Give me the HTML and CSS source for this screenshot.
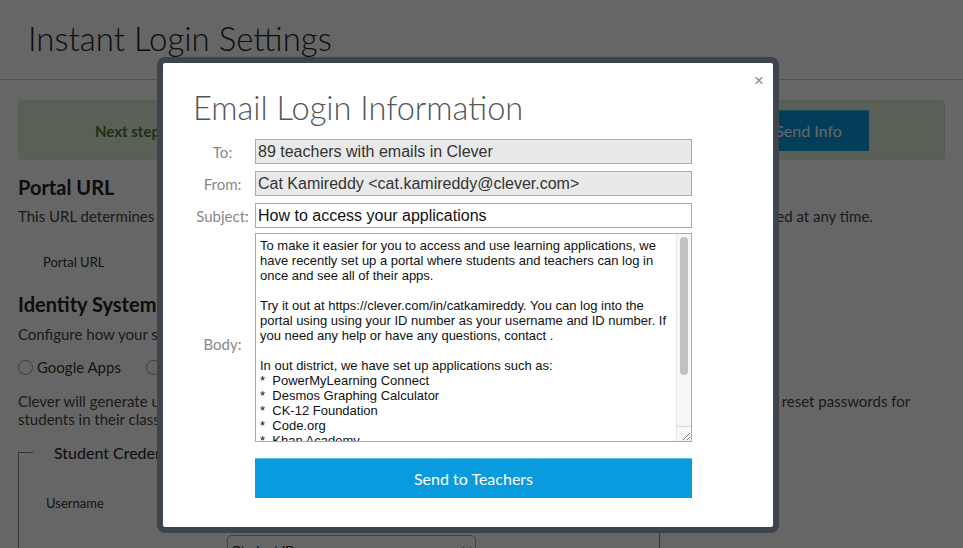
FILE: index.html
```html
<!DOCTYPE html>
<html>
<head>
    <meta charset="utf-8">
    <title>Instant Login Settings</title>
    <link rel="stylesheet" href="styles.css">
</head>
<body>
    <div class="page">
        <header class="page-header">
            <h1>Instant Login Settings</h1>
        </header>

        <main class="content">
            <div class="next-step">
                <span class="next-text">Next step: let your teachers know how to log in</span>
                <button class="btn-send" type="button">Send Info</button>
            </div>

            <section>
                <h2>Portal URL</h2>
                <p>This URL determines where students and teachers in your district go to log in. It can be customized and easily changed at any time.</p>
                <div class="field-row">
                    <label for="portalUrl">Portal URL</label>
                    <input type="text" id="portalUrl" value="https://clever.com/in/catkamireddy" />
                </div>
            </section>

            <section>
                <h2>Identity System</h2>
                <p>Configure how your students and teachers will log in to the portal.</p>
                <div class="radios">
                    <label class="radio"><input type="radio" name="idp" /> Google Apps</label>
                    <label class="radio"><input type="radio" name="idp" /> Active Directory</label>
                    <label class="radio"><input type="radio" name="idp" checked /> Clever Passwords</label>
                </div>
                <p>Clever will generate usernames and passwords for everyone. Teachers and school admins can print badges, view and reset passwords for students in their classes from their teacher dashboard.</p>

                <fieldset class="creds">
                    <legend>Student Credentials</legend>
                    <div class="cred-label">Username</div>
                    <div class="cred-select">
                        <select>
                            <option>Student ID</option>
                        </select>
                    </div>
                </fieldset>
            </section>
        </main>
    </div>

    <div class="backdrop"></div>

    <div class="modal">
        <button class="modal-close" type="button">&times;</button>
        <h2 class="modal-title">Email Login Information</h2>
        <form class="email-form">
            <div class="form-row">
                <label>To:</label>
                <input type="text" class="locked" value="89 teachers with emails in Clever" disabled />
            </div>
            <div class="form-row">
                <label>From:</label>
                <input type="text" class="locked" value="Cat Kamireddy &lt;cat.kamireddy@clever.com&gt;" disabled />
            </div>
            <div class="form-row">
                <label>Subject:</label>
                <input type="text" value="How to access your applications" />
            </div>
            <div class="form-row body-row">
                <label>Body:</label>
                <div class="body-wrap">
                    <textarea class="body-text">To make it easier for you to access and use learning applications, we have recently set up a portal where students and teachers can log in once and see all of their apps.

Try it out at https://clever.com/in/catkamireddy. You can log into the portal using using your ID number as your username and ID number. If you need any help or have any questions, contact .

In out district, we have set up applications such as:
*  PowerMyLearning Connect
*  Desmos Graphing Calculator
*  CK-12 Foundation
*  Code.org
*  Khan Academy
*  Newsela

Log in today and try them out!

Thanks,
Cat Kamireddy</textarea>
                    <div class="scroll-track"><div class="scroll-thumb"></div></div>
                    <div class="scroll-corner">
                        <svg width="9" height="9" viewBox="0 0 9 9">
                            <path d="M1 8L8 1M5 8L8 5" stroke="#777" stroke-width="1" fill="none"/>
                        </svg>
                    </div>
                </div>
            </div>
            <button type="submit" class="btn-teachers">Send to Teachers</button>
        </form>
    </div>
</body>
</html>
```

FILE: styles.css
```css
body {
    margin: 0;
    font-family: Lato, "Open Sans", sans-serif;
    color: #333;
    background: #fff;
    overflow: hidden;
}

/* page behind the dialog */
.page-header {
    height: 79px;
    padding: 0 28px;
    border-bottom: 1px solid #ccc;
}
.page-header h1 {
    margin: 0;
    font-size: 33px;
    font-weight: 300;
    line-height: 77px;
    color: #222;
}
.content {
    padding: 0 18px;
}
.next-step {
    display: flex;
    align-items: center;
    margin-top: 20px;
    padding: 9px 75px 8px 76px;
    background: #e3f1d9;
    border: 1px solid #d6e9c6;
    border-radius: 4px;
    color: #3c763d;
    font-size: 15px;
    font-weight: bold;
}
.next-text {
    flex: 1;
}
.btn-send {
    width: 121px;
    height: 41px;
    padding-bottom: 3px;
    background: #0798e0;
    color: #fff;
    border: none;
    border-top: 1px solid #3fb2ec;
    font-family: Lato, sans-serif;
    font-size: 16px;
}
h2 {
    margin: 15px 0 0;
    font-size: 20px;
    line-height: 24px;
    color: #222;
}
p {
    margin: 8px 0 0;
    font-size: 15px;
    line-height: 18px;
    color: #444;
}
.field-row {
    display: flex;
    align-items: center;
    height: 36px;
    margin-top: 19px;
    padding-left: 25px;
    font-size: 13px;
}
.field-row label {
    width: 170px;
}
.field-row input {
    width: 400px;
    height: 30px;
    border: 1px solid #ccc;
    border-radius: 4px;
}
section + section h2 {
    margin-top: 12px;
}
section + section h2 + p {
    margin-top: 9px;
}
.radios {
    display: flex;
    gap: 25px;
    margin-top: 15px;
    font-size: 15px;
    line-height: 18px;
}
.radio {
    display: flex;
    align-items: center;
    gap: 4px;
}
.radio input {
    appearance: none;
    width: 15px;
    height: 15px;
    margin: 0;
    border: 1px solid #999;
    border-radius: 50%;
    background: #fff;
}
.radios + p {
    margin-top: 16px;
}
.creds {
    width: 626px;
    margin: 15px 0 0;
    padding: 0 0 40px 14px;
    border: 1px solid #888;
    border-bottom: none;
}
.creds legend {
    padding: 0 21px;
    font-size: 16px;
    color: #222;
}
.cred-label {
    padding: 33px 0 0 13px;
    font-size: 13px;
    line-height: 16px;
}
.cred-select {
    margin-top: 24px;
    padding-left: 194px;
}
.cred-select select {
    width: 249px;
    height: 30px;
    border: 1px solid #aaa;
    border-radius: 5px;
    background: #fff;
}

.backdrop {
    position: fixed;
    inset: 0;
    background: rgba(0, 0, 0, 0.6);
}

/* dialog */
.modal {
    position: absolute;
    left: 157px;
    top: 57px;
    width: 580px;
    padding: 25px 0 29px 30px;
    background: #fff;
    border: 6px solid #3d444b;
    border-radius: 8px;
}
.modal-close {
    position: absolute;
    top: 8px;
    right: 9px;
    padding: 0;
    border: none;
    background: none;
    color: #8a8a8a;
    font-size: 17px;
    line-height: 20px;
    cursor: pointer;
}
.modal-title {
    margin: 0 0 11px;
    font-size: 32.6px;
    font-weight: 300;
    line-height: 40px;
    color: #555;
}
.form-row {
    display: flex;
    align-items: center;
}
.form-row + .form-row {
    margin-top: 7px;
}
.form-row.body-row {
    margin-top: 5px;
}
.form-row label {
    width: 59px;
    margin-right: 3px;
    text-align: center;
    font-size: 15px;
    color: #888;
}
.body-row label {
    padding-top: 13px;
}
.form-row input {
    width: 437px;
    height: 25px;
    box-sizing: border-box;
    padding: 0 2px;
    border: 1px solid #aaa;
    background: #fff;
    font-family: "Liberation Sans", Arial, sans-serif;
    font-size: 16px;
    color: #111;
}
.form-row input.locked {
    background: #e9e9e9;
    color: #333;
}
.body-wrap {
    position: relative;
    width: 437px;
    height: 209px;
}
.body-text {
    display: block;
    width: 100%;
    height: 100%;
    box-sizing: border-box;
    margin: 0;
    padding: 4px 19px 4px 4px;
    border: 1px solid #aaa;
    font-family: "Liberation Sans", Arial, sans-serif;
    font-size: 13px;
    line-height: 15px;
    color: #111;
    resize: none;
    overflow: hidden;
}
.scroll-track {
    position: absolute;
    top: 1px;
    right: 1px;
    bottom: 16px;
    width: 14px;
    background: #f7f7f7;
    border-left: 1px solid #e6e6e6;
}
.scroll-thumb {
    width: 8px;
    height: 138px;
    margin: 3px 0 0 3px;
    background: #c2c2c2;
    border-radius: 4px;
}
.scroll-corner {
    position: absolute;
    right: 1px;
    bottom: 1px;
    width: 14px;
    height: 14px;
    display: flex;
    align-items: flex-end;
    justify-content: flex-end;
    background: #f7f7f7;
    border-left: 1px solid #e6e6e6;
    border-top: 1px solid #dcdcdc;
}
.btn-teachers {
    display: block;
    width: 437px;
    height: 40px;
    margin: 16px 0 0 62px;
    background: #099bde;
    border: none;
    border-top: 1px solid #5cc1ee;
    color: #fff;
    font-family: Lato, sans-serif;
    font-size: 16px;
    cursor: pointer;
}
```
